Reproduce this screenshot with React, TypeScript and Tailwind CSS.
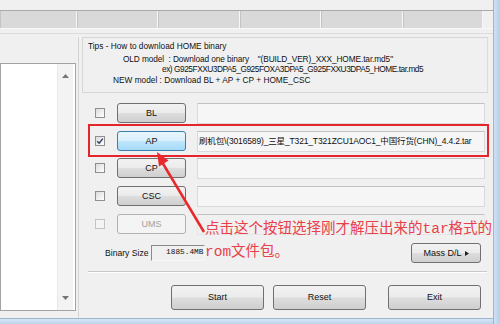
import React from "react";

const btnBase =
  "flex items-center justify-center rounded-[3px] border text-[9px] leading-none";
const btnNormal =
  "border-[#707070] bg-[linear-gradient(#f2f2f2,#ebebeb_48%,#dddddd_52%,#cfcfcf)] text-[#111]";
const btnFocus =
  "border-[#3c7fb1] bg-[linear-gradient(#eaf6fd,#d9f0fc_48%,#bee6fd_52%,#a7d9f5)] text-[#111]";
const btnDisabled = "border-[#adb2b5] bg-[#f4f4f4] text-[#a0a0a0]";

function Check({ checked, disabled }: { checked?: boolean; disabled?: boolean }) {
  return (
    <div
      className={
        "w-[10px] h-[10px] border flex items-center justify-center " +
        (disabled
          ? "border-[#c4c4c4] bg-[#f4f4f4]"
          : "border-[#8f8f8f] bg-[linear-gradient(135deg,#dcdcdc,#ffffff)]")
      }
    >
      {checked && (
        <svg width="8" height="8" viewBox="0 0 8 8">
          <path d="M1.2 4.2 L3.2 6.2 L6.8 1.6" stroke="#2a3f6b" strokeWidth="1.4" fill="none" />
        </svg>
      )}
    </div>
  );
}

function Row({
  label,
  checked,
  focused,
  disabled,
  text,
  className,
}: {
  label: string;
  checked?: boolean;
  focused?: boolean;
  disabled?: boolean;
  text?: string;
  className?: string;
}) {
  return (
    <div className={"flex items-center h-[20px] " + (className ?? "")}>
      <Check checked={checked} disabled={disabled} />
      <div
        className={
          btnBase +
          " ml-[12px] w-[69px] h-[20px] " +
          (disabled ? btnDisabled : focused ? btnFocus : btnNormal)
        }
      >
        {label}
      </div>
      <div
        className={
          "ml-[11px] w-[288px] h-[21px] border border-[#dadada] border-t-[#c2c2c2] flex items-center pl-[1px] overflow-hidden whitespace-nowrap text-[8.5px] tracking-[-0.15px] text-[#111] " +
          (disabled ? "bg-[#f0f0f0] border-[#e6e6e6]" : "bg-[#f6f6f6]")
        }
      >
        {text}
      </div>
    </div>
  );
}

export default function App() {
  const cells = [77, 81, 82, 81, 82, 80];
  return (
    <div className="relative w-[500px] h-[324px] overflow-hidden bg-[#f0f0f0] flex font-['Liberation_Sans','Noto_Sans_CJK_SC',sans-serif] text-black">
      <div className="w-[493px] flex flex-col">
        {/* top status area */}
        <div className="h-[10px]" />
        <div className="h-[18px] flex border-t border-[#a9a9a9]">
          {cells.map((w, i) => (
            <div
              key={i}
              style={{ width: w }}
              className="h-full bg-[#d9d9d9] border-r border-r-[#f7f7f7] border-l border-l-[#c4c4c4]"
            />
          ))}
          <div className="flex-1" />
        </div>
        <div className="h-[5px] border-t border-[#f8f8f8]" />
        <div className="h-[4px] border-t border-[#dcdcdc]" />

        {/* body */}
        <div className="flex flex-1">
          {/* left log panel */}
          <div className="w-[82px] flex flex-col">
            <div className="flex-1 border-r border-[#d4d4d4] mr-[3px] flex flex-col pt-[26px] pb-[5px]">
              <div className="w-[76px] h-[248px] border border-[#a3a3a3] bg-white flex">
                <div className="flex-1" />
                <div className="w-[16px] mr-[2px] bg-[#f3f3f3] border-l border-[#e8e8e8] flex flex-col items-center justify-between py-[10px]">
                  <svg width="7" height="4" viewBox="0 0 7 4">
                    <path d="M0 4 L3.5 0 L7 4 Z" fill="#777" />
                  </svg>
                  <svg width="7" height="4" viewBox="0 0 7 4">
                    <path d="M0 0 L3.5 4 L7 0 Z" fill="#777" />
                  </svg>
                </div>
              </div>
            </div>
          </div>

          {/* right panel */}
          <div className="flex-1 flex flex-col">
            <div className="h-[56px] w-[406px] border border-[#d6d6d6] border-r-[#dcdcdc] pt-[3px] text-[8.3px] leading-[10.5px] text-[#111] whitespace-pre">
              <div className="pl-[5px]">Tips - How to download HOME binary</div>
              <div className="pl-[40px] mt-[2px] tracking-[-0.1px]">{'OLD model  : Download one binary    "(BUILD_VER)_XXX_HOME.tar.md5"'}</div>
              <div className="pl-[79px] tracking-[-0.45px]">ex) G925FXXU3DPA5_G925FOXA3DPA5_G925FXXU3DPA5_HOME.tar.md5</div>
              <div className="pl-[30px]">NEW model : Download BL + AP + CP + HOME_CSC</div>
            </div>

            <div className="pl-[13px] mt-[10px] flex flex-col">
              <Row label="BL" />
              <Row
                label="AP"
                checked
                focused
                className="mt-[8px]"
                text="刷机包\(3016589)_三星_T321_T321ZCU1AOC1_中国行货(CHN)_4.4.2.tar"
              />
              <Row label="CP" className="mt-[7px]" />
              <Row label="CSC" className="mt-[8px]" />
              <Row label="UMS" disabled className="mt-[8px]" />
            </div>

            <div className="mt-[9px] h-[20px] flex items-center">
              <div className="ml-[23px] text-[8.6px] text-[#111]">Binary Size</div>
              <div className="ml-[3px] w-[54px] h-[16px] border border-[#f8f8f8] border-t-[#8a8a8a] border-l-[#8a8a8a] flex items-center justify-end pr-[1px] font-['Liberation_Mono',monospace] text-[7.8px] text-[#111]">
                1885.4MB
              </div>
              <div className={btnBase + " " + btnNormal + " ml-auto mr-[12px] w-[70px] h-[20px] text-[8.3px] gap-[3px]"}>
                <span>Mass D/L</span>
                <svg width="4" height="5" viewBox="0 0 4 5">
                  <path d="M0 0 L4 2.5 L0 5 Z" fill="#222" />
                </svg>
              </div>
            </div>

            <div className="mt-[8px] mx-[6px] border-t border-[#c9c9c9] border-b border-b-white" />

            <div className="mt-[12px] flex pl-[89px]">
              <div className={btnBase + " " + btnNormal + " w-[93px] h-[25px] text-[9px]"}>Start</div>
              <div className={btnBase + " " + btnNormal + " ml-[9px] w-[93px] h-[25px] text-[9px]"}>Reset</div>
              <div className={btnBase + " " + btnNormal + " ml-[22px] w-[93px] h-[25px] text-[9px]"}>Exit</div>
            </div>
          </div>
        </div>

        {/* bottom window frame */}
        <div className="h-[6px] border-t border-[#9fb6cf] bg-[linear-gradient(#d6e6f6,#bcd3ec)]" />
      </div>
      {/* right window frame */}
      <div className="w-[7px] border-l border-[#9fb6cf] bg-[linear-gradient(90deg,#cfe0f3,#b7cfea)]" />

      {/* red highlight box */}
      <div className="absolute left-[88px] top-[124px] w-[401px] h-[33px] border-2 border-[#e4262c]" />

      {/* arrow */}
      <svg className="absolute left-0 top-0 pointer-events-none" width="500" height="324" viewBox="0 0 500 324">
        <line x1="204" y1="232" x2="162" y2="162" stroke="#e8282b" strokeWidth="2.5" />
        <path d="M157 152 L168.5 160.5 L159 166.5 Z" fill="#e8282b" />
      </svg>

      {/* annotation */}
      <div className="absolute left-[205px] top-[218px] text-[14.5px] leading-[23px] text-[#e8404a] whitespace-nowrap font-['Liberation_Mono','Noto_Sans_CJK_SC',monospace]">
        <div>点击这个按钮选择刚才解压出来的tar格式的</div>
        <div>rom文件包。</div>
      </div>
    </div>
  );
}
